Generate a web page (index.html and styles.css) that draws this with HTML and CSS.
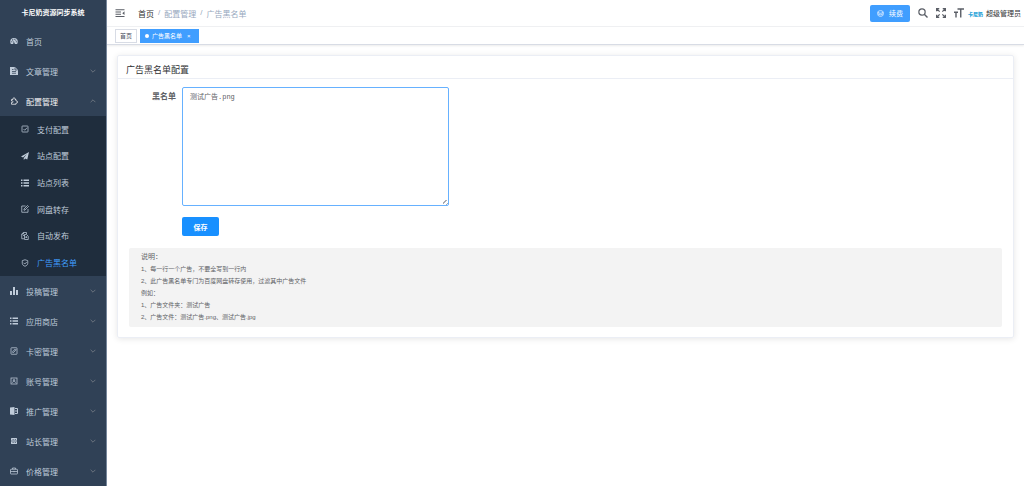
FILE: index.html
```html
<!DOCTYPE html>
<html lang="zh-CN">
<head>
    <meta charset="UTF-8">
    <meta name="viewport" content="width=device-width, initial-scale=1.0">
    <title>广告黑名单</title>
    <link rel="stylesheet" href="styles.css">
</head>
<body>
    <div class="app">
        <aside class="sidebar">
            <h1 class="logo">卡尼奶资源同步系统</h1>
            <nav class="menu">
                <a class="menu-item" href="#">
                    <svg class="icon" viewBox="0 0 16 16"><path fill="currentColor" d="M8 2a7.500 7.500 0 0 0-7.500 7.500c0 1.700.5 3.200 1.300 4.500h4.400l1-2.500L6 7l2.600 4.200L9.800 14h4.400c.8-1.300 1.300-2.800 1.300-4.500A7.500 7.500 0 0 0 8 2z"/><g fill="#304156"><circle cx="3.500" cy="9.500" r="1.100"/><circle cx="5" cy="5.800" r="1.100"/><circle cx="8.500" cy="4.500" r="1.100"/><circle cx="11.500" cy="6" r="1.100"/><circle cx="12.700" cy="9.500" r="1.100"/></g></svg>
                    <span>首页</span>
                </a>
                <a class="menu-item" href="#">
                    <svg class="icon" viewBox="0 0 16 16"><path fill="currentColor" d="M0 0h10l6 6v10H0z"/><path stroke="#304156" stroke-width="1.500" fill="none" d="M10 1v5h5M4 5h3M4 9h8M4 12.500h8"/></svg>
                    <span>文章管理</span>
                    <svg class="arrow" viewBox="0 0 10 10"><path d="M1 3l4 4 4-4"/></svg>
                </a>
                <a class="menu-item open" href="#">
                    <svg class="icon line" viewBox="0 0 16 16"><path d="M3 5h3V3.500a2 2 0 0 1 4 0V5h2v3h1.200a2 2 0 0 1 0 4H12v2.500H3V11h1.500a1.500 1.500 0 0 0 0-3H3z"/></svg>
                    <span>配置管理</span>
                    <svg class="arrow" viewBox="0 0 10 10"><path d="M1 7l4-4 4 4"/></svg>
                </a>
                <div class="submenu">
                    <a class="submenu-item" href="#">
                        <svg class="icon line" viewBox="0 0 16 16"><rect x="2" y="2" width="12" height="12" rx="1"/><path d="M5 8l2.500 2.500L12 5.500"/></svg>
                        <span>支付配置</span>
                    </a>
                    <a class="submenu-item" href="#">
                        <svg class="icon" viewBox="0 0 16 16"><path fill="currentColor" d="M16 0L0 9l4 2 8-7-6.500 8V16l2.800-3.200L12.500 15z"/></svg>
                        <span>站点配置</span>
                    </a>
                    <a class="submenu-item" href="#">
                        <svg class="icon" viewBox="0 0 16 16"><path fill="currentColor" d="M0 1h3v3H0zM5 1h11v3H5zM0 6.500h3v3H0zM5 6.500h11v3H5zM0 12h3v3H0zM5 12h11v3H5z"/></svg>
                        <span>站点列表</span>
                    </a>
                    <a class="submenu-item" href="#">
                        <svg class="icon line" viewBox="0 0 16 16"><path d="M9 2H1.500v12.500H14V8M6 10.500V8l7-7 2 2-7 7z"/></svg>
                        <span>网盘转存</span>
                    </a>
                    <a class="submenu-item" href="#">
                        <svg class="icon line" viewBox="0 0 16 16"><path d="M6 13.500H1.500V4L5 1h6v3M5 1v3H1.500M4 7h3"/><path d="M7 5h4l3.500 3.500V15H7z"/><path d="M10.500 8v4M8.800 10.500h3.600"/></svg>
                        <span>自动发布</span>
                    </a>
                    <a class="submenu-item active" href="#">
                        <svg class="icon line" viewBox="0 0 16 16"><path d="M8 1.500l5.500 1.800v5.200c0 3-2.500 5-5.500 6-3-1-5.500-3-5.500-6V3.300z"/><path d="M5 7.500l2.500 2.500L11.500 6"/></svg>
                        <span>广告黑名单</span>
                    </a>
                </div>
                <a class="menu-item" href="#">
                    <svg class="icon" viewBox="0 0 16 16"><path fill="currentColor" d="M0 8h4v8H0zM6 0h4v16H6zM12 6h4v10h-4z"/></svg>
                    <span>投稿管理</span>
                    <svg class="arrow" viewBox="0 0 10 10"><path d="M1 3l4 4 4-4"/></svg>
                </a>
                <a class="menu-item" href="#">
                    <svg class="icon" viewBox="0 0 16 16"><path fill="currentColor" d="M0 1h3v3H0zM5 1h11v3H5zM0 6.500h3v3H0zM5 6.500h11v3H5zM0 12h3v3H0zM5 12h11v3H5z"/></svg>
                    <span>应用商店</span>
                    <svg class="arrow" viewBox="0 0 10 10"><path d="M1 3l4 4 4-4"/></svg>
                </a>
                <a class="menu-item" href="#">
                    <svg class="icon line" viewBox="0 0 16 16"><rect x="2" y="1.500" width="12" height="13" rx="1"/><path d="M5.500 11V9l5-5 1.500 1.500-5 5.500z"/></svg>
                    <span>卡密管理</span>
                    <svg class="arrow" viewBox="0 0 10 10"><path d="M1 3l4 4 4-4"/></svg>
                </a>
                <a class="menu-item" href="#">
                    <svg class="icon line" viewBox="0 0 16 16"><rect x="2" y="2" width="12" height="12"/><circle cx="8" cy="6.500" r="1.500"/><path d="M5 11.500c0-4 6-4 6 0"/></svg>
                    <span>账号管理</span>
                    <svg class="arrow" viewBox="0 0 10 10"><path d="M1 3l4 4 4-4"/></svg>
                </a>
                <a class="menu-item" href="#">
                    <svg class="icon" viewBox="0 0 16 16"><path fill="currentColor" d="M0 1l9-1v16l-9-1z"/><path fill="none" stroke="currentColor" stroke-width="2" d="M10 3h5v10h-5M10 8h5"/></svg>
                    <span>推广管理</span>
                    <svg class="arrow" viewBox="0 0 10 10"><path d="M1 3l4 4 4-4"/></svg>
                </a>
                <a class="menu-item" href="#">
                    <svg class="icon" viewBox="0 0 16 16"><rect x="2" y="2" width="12" height="12" rx="1" fill="currentColor"/><path stroke="#304156" stroke-width="1.300" d="M2 8h12M5 5h2.500M9.500 5H12M5 11h2.500M9.500 11H12"/></svg>
                    <span>站长管理</span>
                    <svg class="arrow" viewBox="0 0 10 10"><path d="M1 3l4 4 4-4"/></svg>
                </a>
                <a class="menu-item" href="#">
                    <svg class="icon line" viewBox="0 0 16 16"><rect x="1" y="4.500" width="14" height="9.500" rx="1"/><path d="M5 4.500V2h6v2.500M1 9h14M8 7.500v3"/></svg>
                    <span>价格管理</span>
                    <svg class="arrow" viewBox="0 0 10 10"><path d="M1 3l4 4 4-4"/></svg>
                </a>
            </nav>
        </aside>

        <div class="main">
            <header class="navbar">
                <button class="icon-btn" type="button" aria-label="收起菜单">
                    <svg viewBox="0 0 20 16"><path fill="none" stroke="currentColor" stroke-width="2.200" d="M1 1.500h18M1 6h11M1 10.500h11M1 15h18"/><path fill="currentColor" d="M19 4.500v7.500l-4.500-3.700z"/></svg>
                </button>
                <nav class="breadcrumb">
                    <a href="#">首页</a>
                    <span class="sep">/</span>
                    <span>配置管理</span>
                    <span class="sep">/</span>
                    <span>广告黑名单</span>
                </nav>
                <div class="navbar-right">
                    <button class="renew-btn" type="button">
                        <svg viewBox="0 0 16 16"><ellipse cx="8" cy="4.500" rx="6" ry="3"/><path d="M2 4.500v7c0 4 12 4 12 0v-7M2 8c0 4 12 4 12 0"/></svg>
                        <span>续费</span>
                    </button>
                    <button class="icon-btn" type="button" aria-label="搜索">
                        <svg viewBox="0 0 20 20"><circle cx="8" cy="8" r="6.300" fill="none" stroke="currentColor" stroke-width="2.400"/><path stroke="currentColor" stroke-width="2.800" d="M12.500 12.500l6.500 6.500"/></svg>
                    </button>
                    <button class="icon-btn" type="button" aria-label="全屏">
                        <svg viewBox="0 0 20 20"><path fill="none" stroke="currentColor" stroke-width="2.600" d="M1.300 6.500V1.300h5.200M1.300 1.300l6 6M13.500 1.300h5.200v5.200M18.700 1.300l-6 6M1.300 13.500v5.200h5.200M1.300 18.700l6-6M13.500 18.700h5.200v-5.200M18.700 18.700l-6-6"/></svg>
                    </button>
                    <button class="icon-btn" type="button" aria-label="字体大小">
                        <svg viewBox="0 0 20 20"><path fill="none" stroke="currentColor" stroke-width="2.800" d="M7 2h13M13.500 2v17M0 8.500h8M4 8.500V19"/></svg>
                    </button>
                    <a class="user" href="#">
                        <span class="brand">卡尼奶</span>
                        <span>超级管理员</span>
                    </a>
                </div>
            </header>

            <div class="tags">
                <a class="tag" href="#">首页</a>
                <a class="tag active" href="#"><i class="dot"></i>广告黑名单<span class="close">×</span></a>
            </div>

            <main class="content">
                <section class="card">
                    <h2 class="card-title">广告黑名单配置</h2>
                    <form class="form">
                        <label for="blacklist">黑名单</label>
                        <textarea id="blacklist" spellcheck="false">测试广告.png</textarea>
                        <button class="save-btn" type="button">保存</button>
                    </form>
                    <div class="notes">
                        <p class="notes-title">说明：</p>
                        <p>1、每一行一个广告，不要全写到一行内</p>
                        <p>2、此广告黑名单专门为百度网盘转存使用，过滤其中广告文件</p>
                        <p>例如：</p>
                        <p>1、广告文件夹：测试广告</p>
                        <p>2、广告文件：测试广告.png、测试广告.jpg</p>
                    </div>
                </section>
            </main>
        </div>
    </div>
</body>
</html>
```
FILE: styles.css
```css
* {
    box-sizing: border-box;
}

body {
    margin: 0;
    font-family: "Liberation Sans", "Noto Sans CJK SC", sans-serif;
    font-size: 8px;
    color: #303133;
    background-color: #fff;
}

h1,
h2,
p {
    margin: 0;
}

a {
    color: inherit;
    text-decoration: none;
}

button {
    padding: 0;
    border: none;
    font: inherit;
    cursor: pointer;
}

.app {
    display: flex;
    height: 100vh;
}

/* sidebar */
.sidebar {
    flex: none;
    width: 107px;
    overflow: hidden;
    background-color: #304156;
    border-right: 1px solid #76869b;
    color: #bfcbd9;
}

.logo {
    line-height: 26px;
    font-size: 7px;
    text-align: center;
    color: #fff;
}

.menu-item,
.submenu-item {
    display: flex;
    align-items: center;
    gap: 8px;
}

.menu-item {
    height: 30px;
    padding: 0 10px;
}

.menu-item.open {
    color: #f4f4f5;
}

.submenu {
    display: grid;
    grid-template-rows: repeat(6, 1fr);
    height: 160px;
    background-color: #1f2d3d;
}

.submenu-item {
    padding: 0 21px;
}

.submenu-item.active {
    color: #409eff;
}

.submenu-item.active .icon {
    color: #bfcbd9;
}

.icon {
    flex: none;
    width: 8px;
    height: 8px;
}

.icon.line {
    fill: none;
    stroke: currentColor;
    stroke-width: 1.5;
}

.arrow {
    width: 6px;
    height: 6px;
    margin-left: auto;
    fill: none;
    stroke: #909399;
}

/* top bar */
.main {
    flex: 1;
    min-width: 0;
    display: flex;
    flex-direction: column;
}

.navbar {
    display: flex;
    align-items: center;
    height: 27px;
    padding: 0 3px 0 8px;
    border-bottom: 1px solid #f0f1f3;
}

.icon-btn {
    background: none;
    color: #5a5e66;
    line-height: 0;
}

.icon-btn svg {
    width: 10px;
    height: 10px;
}

.breadcrumb {
    display: flex;
    margin-left: 13px;
    color: #97a8be;
}

.breadcrumb a {
    color: #303133;
}

.breadcrumb .sep {
    margin: 0 4px;
}

.navbar-right {
    display: flex;
    align-items: center;
    gap: 8px;
    margin-left: auto;
}

.renew-btn {
    display: flex;
    align-items: center;
    justify-content: center;
    gap: 5px;
    width: 40px;
    height: 17px;
    border-radius: 2px;
    background-color: #409eff;
    color: #fff;
    font-size: 7px;
}

.renew-btn svg {
    width: 7px;
    height: 7px;
    fill: none;
    stroke: currentColor;
    stroke-width: 1.5;
}

.user {
    display: flex;
    align-items: center;
    gap: 3px;
    margin-left: -4px;
    font-size: 7px;
}

.brand {
    font-size: 5px;
    font-weight: 900;
    color: #2ba3d8;
}

/* opened pages */
.tags {
    display: flex;
    align-items: center;
    gap: 3px;
    height: 18px;
    padding: 0 8px;
    border-bottom: 1px solid #d8dce5;
    box-shadow: 0 1px 2px rgba(0, 0, 0, 0.08);
    font-size: 6px;
}

.tag {
    display: flex;
    align-items: center;
    height: 14px;
    padding: 0 4px;
    border: 1px solid #d8dce5;
    color: #495060;
}

.tag.active {
    border-color: #409eff;
    background-color: #409eff;
    color: #fff;
}

.dot {
    width: 4px;
    height: 4px;
    margin-right: 3px;
    border-radius: 50%;
    background-color: #fff;
}

.close {
    margin: 0 3px 0 5px;
}

/* page */
.content {
    padding: 10px 10px;
}

.card {
    padding-bottom: 10px;
    border: 1px solid #ebeef5;
    border-radius: 2px;
    box-shadow: 0 1px 6px rgba(0, 0, 0, 0.1);
}

.card-title {
    height: 23px;
    padding: 0 8px;
    border-bottom: 1px solid #ebeef5;
    font-size: 9px;
    font-weight: normal;
    line-height: 28px;
}

.form {
    display: grid;
    grid-template-columns: 58px minmax(0, 267px);
    gap: 11px 6px;
    padding-top: 8px;
}

.form label {
    line-height: 19px;
    text-align: right;
    color: #606266;
    font-weight: bold;
}

.form textarea {
    height: 119px;
    padding: 4px 7px;
    border: 1px solid #66b1ff;
    border-radius: 2px;
    outline: none;
    color: #606266;
    font-family: "Liberation Mono", "Noto Sans CJK SC", monospace;
    font-size: 7px;
    line-height: 10px;
}

.form textarea::-webkit-resizer {
    background: repeating-linear-gradient(135deg, transparent 0, transparent 2px, #a8abb2 2px, #a8abb2 3px) right bottom / 5px 5px no-repeat;
    clip-path: polygon(100% 0, 100% 100%, 0 100%);
}

.save-btn {
    grid-column: 2;
    justify-self: start;
    width: 37px;
    height: 19px;
    border-radius: 2px;
    background-color: #1890ff;
    color: #fff;
    font-size: 7px;
    font-weight: bold;
}

.notes {
    margin: 12px 11px 0;
    padding: 3px 12px 4px;
    border-radius: 2px;
    background-color: #f3f3f3;
    color: #606266;
    font-size: 6px;
    line-height: 12px;
}

.notes .notes-title {
    font-size: 7px;
}
```
